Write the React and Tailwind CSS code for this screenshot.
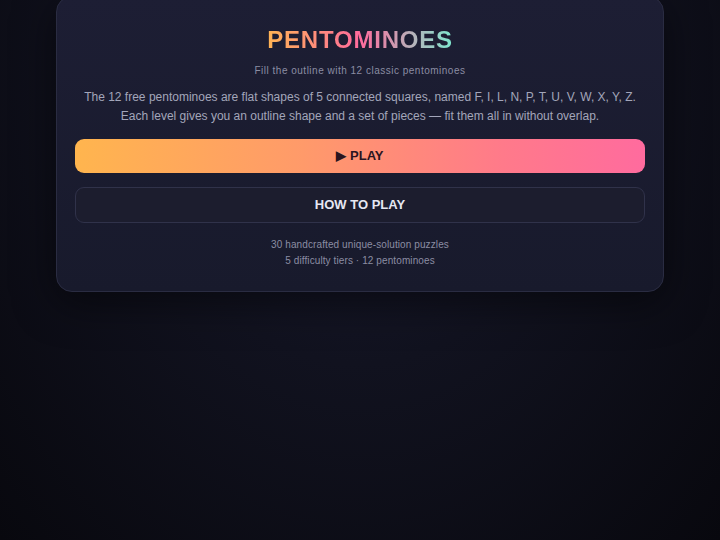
export default function App() {
    return (
        <div
            className="min-h-screen w-full overflow-hidden bg-[radial-gradient(ellipse_at_50%_10%,#1b1c33_0%,#11121f_45%,#08080e_100%)]"
            style={{ fontFamily: '"Liberation Sans", Arial, sans-serif' }}
        >
            <div className="mx-auto -mt-1 w-[608px] rounded-2xl border border-[#2a2c42] bg-[linear-gradient(180deg,#1d1e34_0%,#181a2c_100%)] px-[18px] pb-[22px] pt-[29px] text-center shadow-[0_10px_40px_rgba(0,0,0,0.5)]">
                <h1 className="inline-block bg-[linear-gradient(90deg,#ffb454_0%,#ff6b9d_50%,#7ee8d0_100%)] bg-clip-text text-[24px] font-bold leading-[28px] tracking-[0.8px] text-transparent">
                    PENTOMINOES
                </h1>
                <p className="mt-[8px] text-[10px] leading-[16px] tracking-[0.5px] text-[#8b8da3]">
                    Fill the outline with 12 classic pentominoes
                </p>
                <p className="mt-[9px] text-[12px] leading-[19px] text-[#a3a6ba]">
                    The 12 free pentominoes are flat shapes of 5 connected squares, named F, I, L, N, P, T, U, V, W, X, Y, Z.
                    <br />
                    Each level gives you an outline shape and a set of pieces — fit them all in without overlap.
                </p>
                <button
                    type="button"
                    className="mt-[13px] flex h-[34px] w-full items-center justify-center rounded-[9px] bg-[linear-gradient(90deg,#ffb54e_0%,#ff9a6a_40%,#ff7a8a_75%,#ff6b9e_100%)] text-[13px] font-bold text-[#2a1420]"
                >
                    ▶ PLAY
                </button>
                <button
                    type="button"
                    className="mt-[14px] flex h-[36px] w-full items-center justify-center rounded-[9px] border border-[#30324a] bg-[#1c1d2e] text-[13px] font-bold text-[#e6e7f2]"
                >
                    HOW TO PLAY
                </button>
                <div className="mt-[14px] text-[10px] leading-[16px] tracking-[0.1px] text-[#8b8da3]">
                    <p>30 handcrafted unique-solution puzzles</p>
                    <p>5 difficulty tiers · 12 pentominoes</p>
                </div>
            </div>
        </div>
    );
}
